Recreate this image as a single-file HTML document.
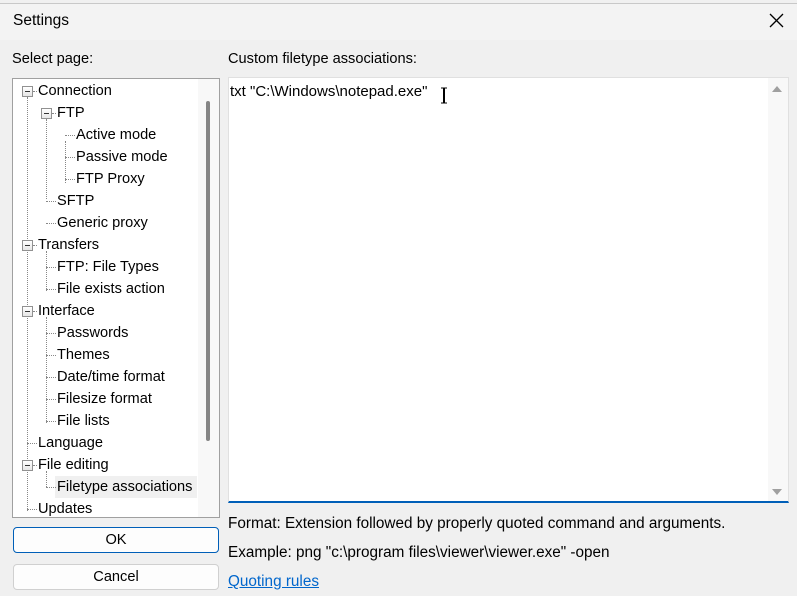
<!DOCTYPE html>
<html><head><style>
*{margin:0;padding:0;box-sizing:border-box}
body{width:797px;height:596px;background:#f0f0f0;font-family:"Liberation Sans",sans-serif;font-size:14.6px;color:#000;position:relative;overflow:hidden}
.a{position:absolute;white-space:nowrap}
.title{left:0;top:3px;width:797px;height:37px;background:#f3f3f3;border-top:1px solid #c8c8c8}
.tree{left:12px;top:78px;width:208px;height:440px;background:#fff;border:1px solid #a0a0a0;overflow:hidden}
.row{position:absolute;height:20px;line-height:20px}
.exp{position:absolute;width:11px;height:11px;border:1px solid #919191;background:linear-gradient(#fff,#e6e6e6)}
.exp:after{content:"";position:absolute;left:2px;top:4px;width:5px;height:1px;background:#333}
.vl{position:absolute;border-left:1px dotted #888;width:0}
.hl{position:absolute;border-top:1px dotted #888;height:0}
.btn{position:absolute;left:13px;width:206px;height:26px;background:#fdfdfd;border:1px solid #d0d0d0;border-radius:4px;text-align:center;line-height:24px}
</style></head><body>
<div class="a title"></div>
<div class="a" style="left:13px;top:12px;font-size:15.5px">Settings</div>
<svg class="a" style="left:769px;top:13px" width="15" height="15"><path d="M1 1L14 14M14 1L1 14" stroke="#000" stroke-width="1.3"/></svg>
<div class="a" style="left:12px;top:51px">Select page:</div>
<div class="a" style="left:228px;top:51px">Custom filetype associations:</div>

<div class="a tree">
 <div class="vl" style="left:14px;top:18px;height:414px"></div>
 <div class="vl" style="left:33px;top:40px;height:80px"></div>
 <div class="vl" style="left:52px;top:62px;height:42px"></div>
 <div class="vl" style="left:33px;top:172px;height:40px"></div>
 <div class="vl" style="left:33px;top:238px;height:106px"></div>
 <div class="vl" style="left:33px;top:392px;height:16px"></div>
 <div class="hl" style="left:20px;top:12px;width:4px"></div>
 <div class="exp" style="left:9px;top:7px"></div><div class="row" style="left:25px;top:2px">Connection</div>
 <div class="exp" style="left:28px;top:29px"></div><div class="hl" style="left:39px;top:34px;width:4px"></div><div class="row" style="left:44px;top:24px">FTP</div>
 <div class="hl" style="left:52px;top:56px;width:10px"></div><div class="row" style="left:63px;top:46px">Active mode</div>
 <div class="hl" style="left:52px;top:78px;width:10px"></div><div class="row" style="left:63px;top:68px">Passive mode</div>
 <div class="hl" style="left:52px;top:100px;width:10px"></div><div class="row" style="left:63px;top:90px">FTP Proxy</div>
 <div class="hl" style="left:33px;top:122px;width:10px"></div><div class="row" style="left:44px;top:112px">SFTP</div>
 <div class="hl" style="left:33px;top:144px;width:10px"></div><div class="row" style="left:44px;top:134px">Generic proxy</div>
 <div class="exp" style="left:9px;top:161px"></div><div class="hl" style="left:20px;top:166px;width:4px"></div><div class="row" style="left:25px;top:156px">Transfers</div>
 <div class="hl" style="left:33px;top:188px;width:10px"></div><div class="row" style="left:44px;top:178px">FTP: File Types</div>
 <div class="hl" style="left:33px;top:210px;width:10px"></div><div class="row" style="left:44px;top:200px">File exists action</div>
 <div class="exp" style="left:9px;top:227px"></div><div class="hl" style="left:20px;top:232px;width:4px"></div><div class="row" style="left:25px;top:222px">Interface</div>
 <div class="hl" style="left:33px;top:254px;width:10px"></div><div class="row" style="left:44px;top:244px">Passwords</div>
 <div class="hl" style="left:33px;top:276px;width:10px"></div><div class="row" style="left:44px;top:266px">Themes</div>
 <div class="hl" style="left:33px;top:298px;width:10px"></div><div class="row" style="left:44px;top:288px">Date/time format</div>
 <div class="hl" style="left:33px;top:320px;width:10px"></div><div class="row" style="left:44px;top:310px">Filesize format</div>
 <div class="hl" style="left:33px;top:342px;width:10px"></div><div class="row" style="left:44px;top:332px">File lists</div>
 <div class="hl" style="left:14px;top:364px;width:10px"></div><div class="row" style="left:25px;top:354px">Language</div>
 <div class="exp" style="left:9px;top:381px"></div><div class="hl" style="left:20px;top:386px;width:4px"></div><div class="row" style="left:25px;top:376px">File editing</div>
 <div style="position:absolute;left:42px;top:397px;width:142px;height:22px;background:#f0f0f0"></div>
 <div class="hl" style="left:33px;top:408px;width:10px"></div><div class="row" style="left:44px;top:398px">Filetype associations</div>
 <div class="hl" style="left:14px;top:430px;width:10px"></div><div class="row" style="left:25px;top:420px">Updates</div>
 <div style="position:absolute;left:185px;top:0;width:21px;height:440px;background:#f8f8f8"></div>
 <div style="position:absolute;left:193px;top:22px;width:4px;height:340px;background:#858585;border-radius:2px"></div>
</div>

<div class="a" style="left:228px;top:77px;width:561px;height:426px;background:#fff;border:1px solid #e0e0e0;border-bottom:2px solid #005fb8"></div>
<div class="a" style="left:768px;top:78px;width:20px;height:423px;background:#f8f8f8"></div>
<svg class="a" style="left:772px;top:85px" width="10" height="8"><path d="M0 7L5 1L10 7Z" fill="#a0a0a0"/></svg>
<svg class="a" style="left:772px;top:488px" width="10" height="8"><path d="M0 1L5 7L10 1Z" fill="#a0a0a0"/></svg>
<div class="a" style="left:230px;top:83px;font-size:15px">txt "C:\Windows\notepad.exe"</div>
<svg class="a" style="left:440px;top:87px" width="8" height="17"><path d="M1 1H3.5V16H1M7 1H4.5V16H7M4 1V16" stroke="#000" fill="none" stroke-width="1"/></svg>

<div class="a" style="left:228px;top:515px;font-size:15.3px">Format: Extension followed by properly quoted command and arguments.</div>
<div class="a" style="left:228px;top:544px;font-size:15.3px">Example: png "c:\program files\viewer\viewer.exe" -open</div>
<div class="a" style="left:228px;top:573px;color:#0066cc;text-decoration:underline;font-size:15.3px">Quoting rules</div>

<div class="btn" style="top:527px;border-color:#005fb8">OK</div>
<div class="btn" style="top:564px">Cancel</div>
</body></html>
